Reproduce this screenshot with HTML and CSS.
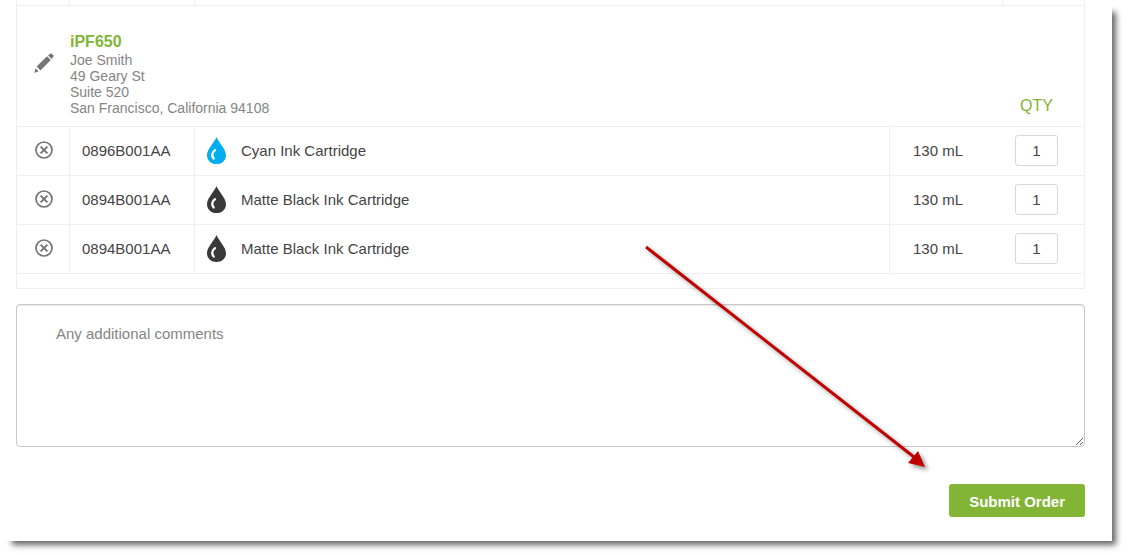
FILE: index.html
```html
<!DOCTYPE html>
<html lang="en">
<head>
<meta charset="utf-8">
<title>Order supplies</title>
<link rel="stylesheet" href="styles.css">
</head>
<body>
<svg class="sprite" aria-hidden="true">
  <symbol id="remove" viewBox="0 0 18 18"><circle cx="9" cy="9" r="8" fill="none" stroke="currentColor" stroke-width="1.7"/><path d="M5.600 5.600l6.800 6.800M12.400 5.600l-6.800 6.800" stroke="currentColor" stroke-width="2"/></symbol>
  <symbol id="drop" viewBox="0 0 19 27"><path d="M9.500 0C10.800 4.500 19 12 19 18.200C19 23.400 15 27 9.500 27S0 23.400 0 18.200C0 12 8.200 4.500 9.500 0Z" fill="currentColor"/><path d="M8 13.200C4.800 15.200 4.400 18.800 6.700 21.600" fill="none" stroke="#fff" stroke-width="2.300" stroke-linecap="round"/></symbol>
</svg>
<main class="panel">
  <form class="order">
    <table class="items">
      <colgroup><col class="col-action"><col class="col-sku"><col><col class="col-size"><col class="col-qty"></colgroup>
      <tbody>
        <tr class="previous"><td></td><td></td><td colspan="2"></td><td></td></tr>
        <tr class="group">
          <td class="action edit open"><button class="icon-button" type="button" aria-label="Edit address"><svg width="20" height="20" viewBox="0 0 20 20" fill="currentColor"><path d="M0.300 19.700L1.600 15.300L4.700 18.400ZM2.600 13.600L13 3.200L16.800 7L6.400 17.400ZM14.100 2.500L16 0.800Q17 0 18 0.900L19.200 2.100Q20 3.100 19.200 4.100L17.600 6Z"/></svg></button></td>
          <td class="address open" colspan="3"><h2 class="printer">iPF650</h2><address>Joe Smith<br>49 Geary St<br>Suite 520<br>San Francisco, California 94108</address></td>
          <td class="qty-head">QTY</td>
        </tr>
        <tr class="item">
          <td class="action"><button class="icon-button" type="button" aria-label="Remove"><svg width="18" height="18"><use href="#remove"/></svg></button></td>
          <td class="sku">0896B001AA</td>
          <td><div class="product"><svg class="cyan" width="19" height="27"><use href="#drop"/></svg>Cyan Ink Cartridge</div></td>
          <td class="size open">130 mL</td>
          <td class="qty"><input type="text" value="1" aria-label="Quantity, Cyan Ink Cartridge"></td>
        </tr>
        <tr class="item">
          <td class="action"><button class="icon-button" type="button" aria-label="Remove"><svg width="18" height="18"><use href="#remove"/></svg></button></td>
          <td class="sku">0894B001AA</td>
          <td><div class="product"><svg class="black" width="19" height="27"><use href="#drop"/></svg>Matte Black Ink Cartridge</div></td>
          <td class="size open">130 mL</td>
          <td class="qty"><input type="text" value="1" aria-label="Quantity, Matte Black Ink Cartridge"></td>
        </tr>
        <tr class="item">
          <td class="action"><button class="icon-button" type="button" aria-label="Remove"><svg width="18" height="18"><use href="#remove"/></svg></button></td>
          <td class="sku">0894B001AA</td>
          <td><div class="product"><svg class="black" width="19" height="27"><use href="#drop"/></svg>Matte Black Ink Cartridge</div></td>
          <td class="size open">130 mL</td>
          <td class="qty"><input type="text" value="1" aria-label="Quantity, Matte Black Ink Cartridge"></td>
        </tr>
        <tr class="footer"><td colspan="5"></td></tr>
      </tbody>
    </table>
    <textarea class="comments" placeholder="Any additional comments" aria-label="Any additional comments"></textarea>
    <button class="submit" type="submit">Submit Order</button>
  </form>
  <svg class="pointer" width="300" height="240" viewBox="0 0 300 240" aria-hidden="true"><path d="M6 7L274 217" stroke="#c00000" stroke-width="3"/><path d="M285 227L278 211L268 223Z" fill="#c00000"/></svg>
</main>
</body>
</html>
```

FILE: styles.css
```css
* { box-sizing: border-box; }
body {
  margin: 0;
  background: #fff;
  color: #444;
  font: 15px/18px "Liberation Sans", Arial, sans-serif;
}
.sprite { position: absolute; width: 0; height: 0; }
.panel {
  position: relative;
  margin: 0 15px 15px 0;
  padding: 0 27px 24px 16px;
  background: #fff;
  box-shadow: 8px 8px 6px -4px rgba(0, 0, 0, 0.6);
}
.order { display: flex; flex-direction: column; }
.items {
  width: 100%;
  table-layout: fixed;
  border-collapse: separate;
  border-spacing: 0;
  border-left: 1px solid #efefef;
}
.col-action { width: 53px; }
.col-sku { width: 125px; }
.col-size { width: 113px; }
.col-qty { width: 82px; }
td {
  padding: 0;
  border-right: 1px solid #efefef;
  border-bottom: 1px solid #efefef;
}
.open { border-right: 0; }
.previous td { height: 6px; }
.group td { height: 121px; }
.item td { height: 49px; }
.footer td { height: 15px; }
.action { padding: 0 0 2px 2px; }
.edit { padding: 0 0 6px; }
.icon-button {
  display: flex;
  width: max-content;
  margin: 0 auto;
  padding: 0;
  border: 0;
  background: none;
  color: #757575;
}
.address { padding-top: 16px; vertical-align: middle; }
.printer {
  margin: 0;
  color: #82b536;
  font-size: 16px;
  line-height: 20px;
}
address {
  color: #858585;
  font-size: 14px;
  font-style: normal;
  line-height: 16px;
}
.qty-head {
  padding: 0 31px 11px 0;
  color: #82b536;
  font-size: 16px;
  text-align: right;
  vertical-align: bottom;
}
.sku { padding-left: 12px; }
.product {
  display: flex;
  align-items: center;
  gap: 15px;
  padding: 0 0 1px 12px;
}
.cyan { color: #00adef; }
.black { color: #393939; }
.size { padding-left: 23px; }
.qty { padding: 0 0 2px 12px; }
.qty input {
  display: block;
  width: 43px;
  height: 31px;
  padding: 0;
  border: 1px solid #d8d8d8;
  border-radius: 3px;
  background: #fff;
  color: #444;
  font: inherit;
  text-align: center;
}
.comments {
  height: 143px;
  margin-top: 15px;
  padding: 20px 39px;
  border: 1px solid #c8c8c8;
  border-radius: 4px;
  box-shadow: inset 0 1px 1px rgba(0, 0, 0, 0.08);
  font: inherit;
  resize: vertical;
}
.comments::placeholder { color: #858585; }
.submit {
  align-self: flex-end;
  height: 33px;
  margin-top: 37px;
  padding: 2px 20px 0;
  border: 0;
  border-radius: 3px;
  background: #82b536;
  color: #fff;
  font: bold 15px/18px "Liberation Sans", Arial, sans-serif;
}
.pointer {
  position: absolute;
  top: 240px;
  right: 172px;
  filter: drop-shadow(3px 3px 2px rgba(0, 0, 0, 0.4));
  pointer-events: none;
}
```
